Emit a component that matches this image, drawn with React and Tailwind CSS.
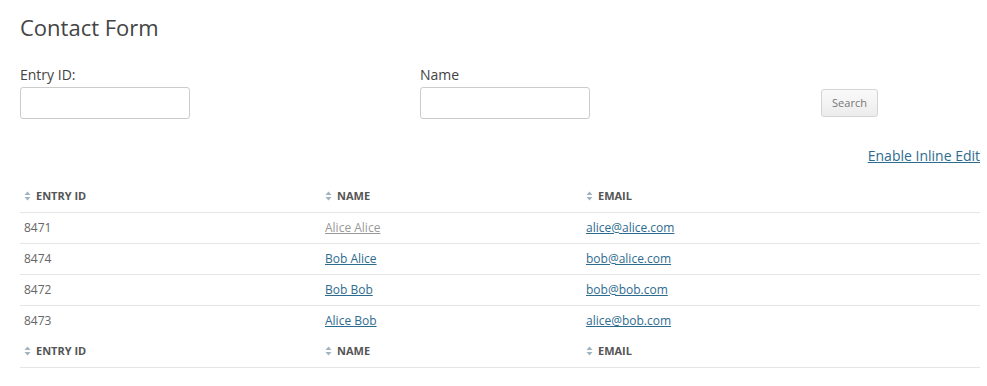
const rows = [
  { id: "8471", name: "Alice Alice", email: "alice@alice.com", visited: true },
  { id: "8474", name: "Bob Alice", email: "bob@alice.com" },
  { id: "8472", name: "Bob Bob", email: "bob@bob.com" },
  { id: "8473", name: "Alice Bob", email: "alice@bob.com" },
];

function SortIcon() {
  return (
    <svg width="7" height="10" viewBox="0 0 7 10" className="inline-block mr-[5px] -mt-[2px]">
      <path d="M3.5 0.5 L6.5 4 L0.5 4 Z" fill="#9fb4c3" />
      <path d="M3.5 9.5 L6.5 6 L0.5 6 Z" fill="#9fb4c3" />
    </svg>
  );
}

function HeaderRow() {
  return (
    <tr className="border-b border-[#e5e5e5]">
      <th className="h-[31px] pl-[4px] text-left text-[11px] font-bold uppercase text-[#555] w-[301px]">
        <SortIcon />Entry ID
      </th>
      <th className="h-[31px] pl-[4px] text-left text-[11px] font-bold uppercase text-[#555] w-[261px]">
        <SortIcon />Name
      </th>
      <th className="h-[31px] pl-[4px] text-left text-[11px] font-bold uppercase text-[#555]">
        <SortIcon />Email
      </th>
    </tr>
  );
}

export default function App() {
  return (
    <div className="bg-white min-h-[386px] pl-[20px] pr-[7px] pt-[13px] font-['Open_Sans',sans-serif] text-[#555]">
      <h1 className="text-[22px] leading-[28px] text-[#444]">Contact Form</h1>

      <div className="flex items-end mt-[24px]">
        <div className="w-[400px]">
          <label className="block text-[14px] leading-[20px] text-[#444] mb-[2px]">Entry ID:</label>
          <input className="block w-[170px] h-[32px] border border-[#ccc] rounded-[3px]" />
        </div>
        <div className="w-[401px]">
          <label className="block text-[14px] leading-[20px] text-[#444] mb-[2px]">Name</label>
          <input className="block w-[170px] h-[32px] border border-[#ccc] rounded-[3px]" />
        </div>
        <button className="w-[57px] h-[28px] mb-[2px] border border-[#d4d4d4] rounded-[3px] bg-gradient-to-b from-[#fafafa] to-[#ececec] text-[11px] text-[#777]">
          Search
        </button>
      </div>

      <div className="flex justify-end mt-[27px]">
        <a href="#" className="text-[14px] leading-[20px] text-[#2d6b8f] underline">Enable Inline Edit</a>
      </div>

      <table className="w-full mt-[15px] border-collapse">
        <thead>
          <HeaderRow />
        </thead>
        <tbody>
          {rows.map((r, i) => (
            <tr key={r.id} className={i < rows.length - 1 ? "border-b border-[#e5e5e5]" : ""}>
              <td className="h-[31px] pl-[4px] text-[12px] text-[#666]">{r.id}</td>
              <td className="h-[31px] pl-[4px] text-[12px]">
                <a href="#" className={r.visited ? "underline text-[#999]" : "underline text-[#2d6b8f]"}>{r.name}</a>
              </td>
              <td className="h-[31px] pl-[4px] text-[12px]">
                <a href="#" className="underline text-[#2d6b8f]">{r.email}</a>
              </td>
            </tr>
          ))}
        </tbody>
        <tfoot>
          <HeaderRow />
        </tfoot>
      </table>
    </div>
  );
}
